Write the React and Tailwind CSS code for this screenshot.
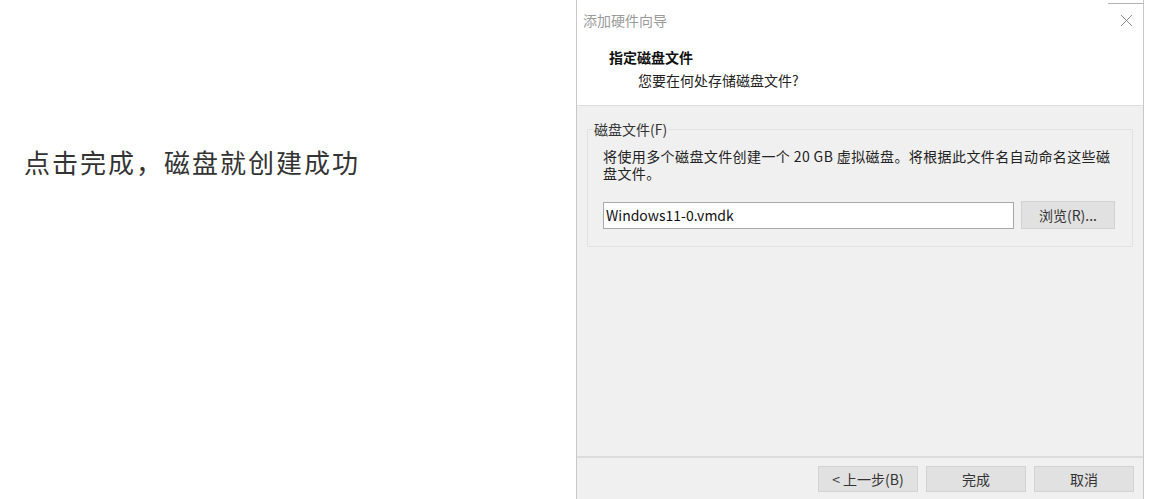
const cjk = "font-['Noto_Sans_CJK_SC',sans-serif]";

function WizardButton({ children }) {
  return (
    <button
      type="button"
      className="flex h-[26px] w-[100px] items-center justify-center border border-[#d2d2d2] bg-[#e1e1e1] text-[14px] text-[#333]"
    >
      {children}
    </button>
  );
}

export default function App() {
  return (
    <div className={`flex h-[499px] w-[1149px] overflow-hidden bg-white ${cjk}`}>
      <div className="w-[576px] shrink-0 pl-6 pt-[145px]">
        <p className="text-[26px] leading-[34px] tracking-[2px] text-[#333]">
          点击完成，磁盘就创建成功
        </p>
      </div>

      <div className="relative flex h-full w-[568px] shrink-0 flex-col border-x border-[#c8c8c8]">
        <div className="absolute right-[-1px] top-[3px] h-px w-[36px] bg-[#b4b4b4]" />
        <header className="h-[106px] shrink-0 border-b border-[#dcdcdc] bg-white">
          <div className="flex items-center justify-between pl-[6px] pr-[10px] pt-[10px]">
            <span className="text-[14px] leading-[20px] text-[#9a9a9a]">添加硬件向导</span>
            <svg width="13" height="13" viewBox="0 0 13 13" fill="none" stroke="#8a8a8a" strokeWidth="1">
              <path d="M1 1l11 11M12 1L1 12" />
            </svg>
          </div>
          <p className="mt-[17px] pl-[32px] text-[14px] font-bold leading-[20px] text-[#111]">
            指定磁盘文件
          </p>
          <p className="mt-[3px] pl-[61px] text-[14px] leading-[20px] text-[#222]">
            您要在何处存储磁盘文件?
          </p>
        </header>

        <main className="flex flex-1 flex-col bg-[#f0f0f0]">
          <section className="relative mx-[10px] mt-[23px] h-[118px] border border-[#e2e2e2]">
            <span className="absolute left-[5px] top-[-11px] bg-[#f0f0f0] px-px text-[14px] leading-[20px] text-[#333]">
              磁盘文件(F)
            </span>
            <div className="px-[15px] pt-[18px]">
              <p className="whitespace-nowrap text-[14px] leading-[17px] tracking-[0.4px] text-[#222]">
                将使用多个磁盘文件创建一个 20 GB 虚拟磁盘。将根据此文件名自动命名这些磁
                <br />
                盘文件。
              </p>
              <div className="mt-[19px] flex items-center gap-[7px]">
                <div className="flex h-[27px] w-[411px] items-center border border-[#a9a9a9] bg-white px-[2px] text-[14px] text-[#111]">
                  Windows11-0.vmdk
                </div>
                <button
                  type="button"
                  className="flex h-[28px] w-[94px] items-center justify-center border border-[#d2d2d2] bg-[#e1e1e1] text-[14px] text-[#333]"
                >
                  浏览(R)...
                </button>
              </div>
            </div>
          </section>
          <div className="flex-1" />
          <footer className="flex h-[43px] shrink-0 justify-end gap-[8px] border-t-2 border-[#dcdcdc] pr-[9px] pt-[8px]">
            <WizardButton>&lt; 上一步(B)</WizardButton>
            <WizardButton>完成</WizardButton>
            <WizardButton>取消</WizardButton>
          </footer>
        </main>
      </div>
    </div>
  );
}
